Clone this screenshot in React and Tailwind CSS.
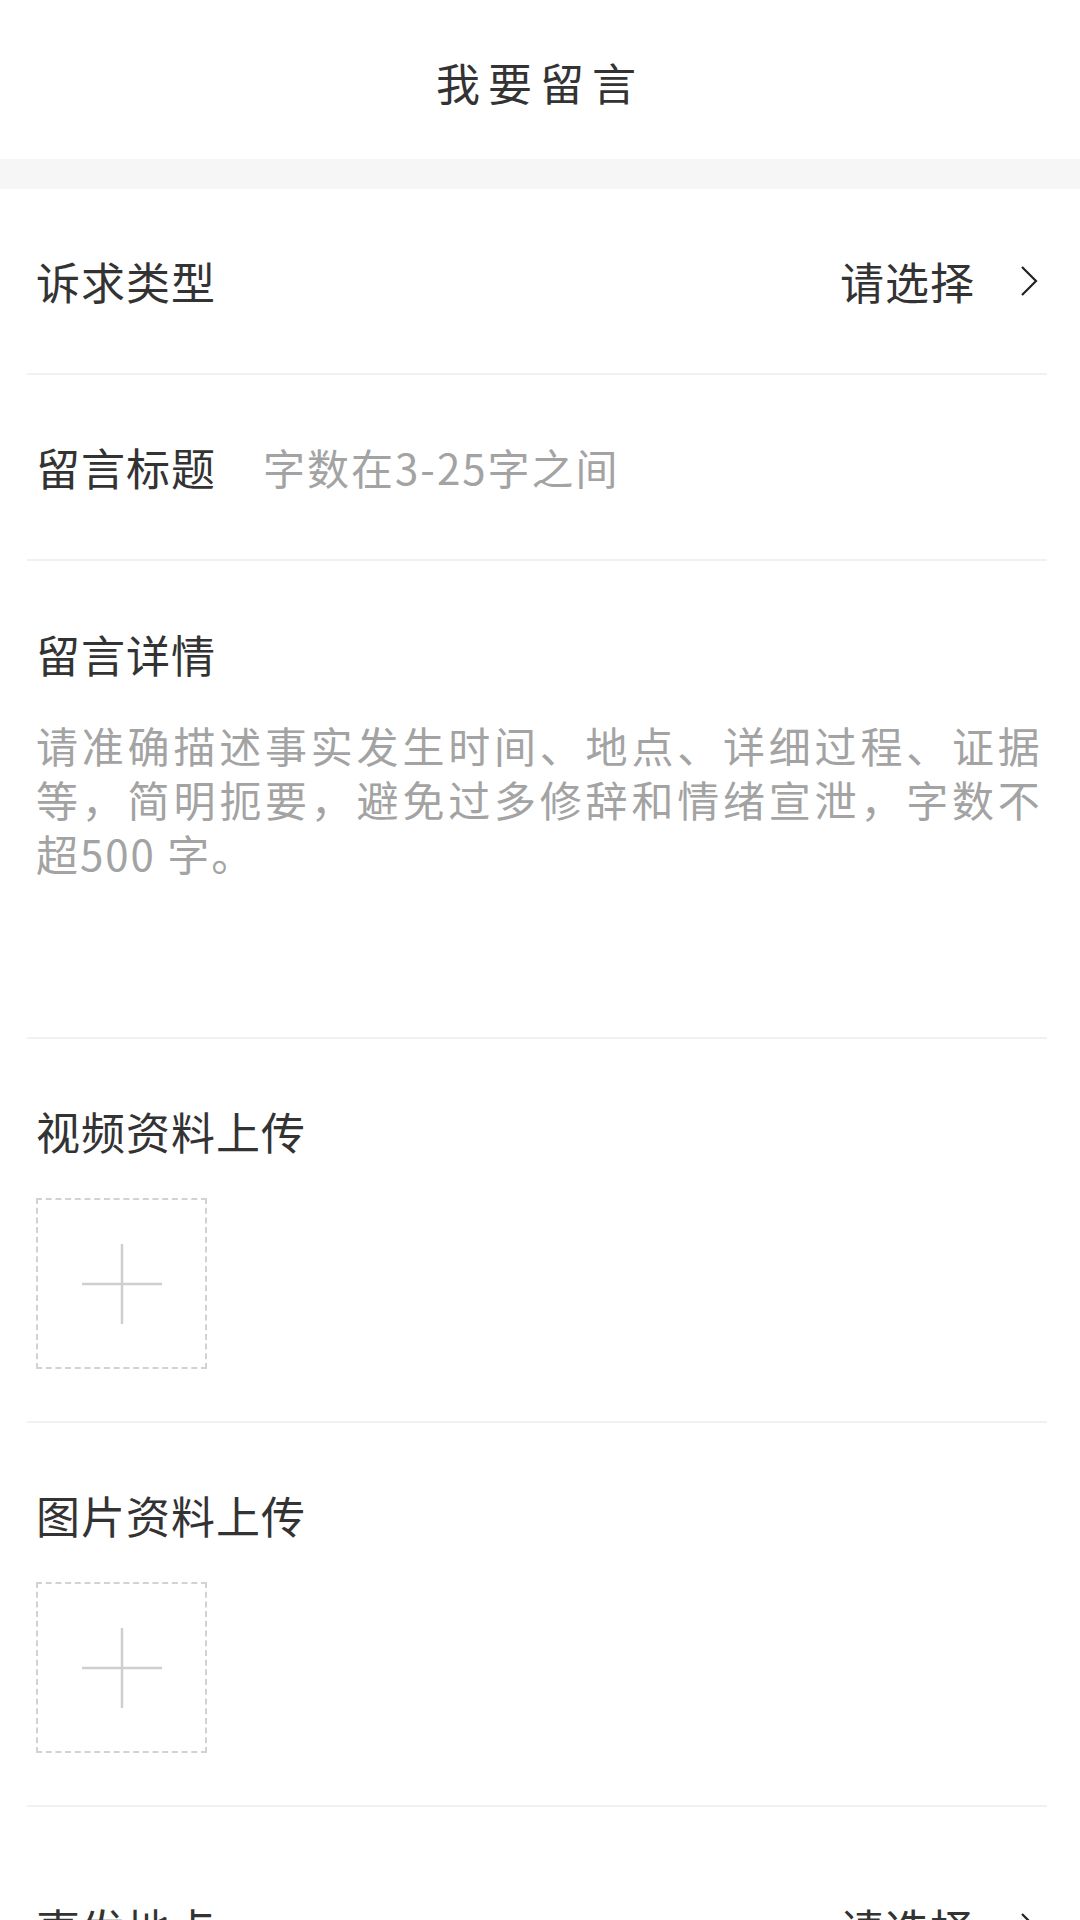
import React from "react";

const font = "font-['Noto_Sans_CJK_SC','Noto_Sans',sans-serif]";

const Chevron = () => (
  <svg width="18" height="32" viewBox="0 0 18 32" fill="none">
    <polyline points="2,2 16,16 2,30" stroke="#222" strokeWidth="2.2" strokeLinejoin="miter" />
  </svg>
);

const Divider = () => <div className="ml-[27px] mr-[33px] h-[2px] bg-[#f1f1f1]"></div>;

const SelectRow = ({ label, className }) => {
  return (
    <div className={"flex items-center justify-between pl-[36px] pr-[42px] " + className}>
      <span className="text-[44px] leading-[54px] tracking-[1px] text-[#333]">{label}</span>
      <div className="flex items-center gap-[45px]">
        <span className="text-[44px] leading-[54px] tracking-[1px] text-[#333]">请选择</span>
        <Chevron />
      </div>
    </div>
  );
};

const Upload = ({ label }) => {
  return (
    <div className="pl-[36px] pt-[65px] pb-[52px]">
      <div className="text-[44px] leading-[54px] tracking-[1px] text-[#333]">{label}</div>
      <div className="mt-[40px] flex h-[171px] w-[171px] items-center justify-center border-2 border-dashed border-[#d2d2d2]">
        <svg width="80" height="80" viewBox="0 0 80 80">
          <line x1="0" y1="40" x2="80" y2="40" stroke="#cfcfcf" strokeWidth="2.5" />
          <line x1="40" y1="0" x2="40" y2="80" stroke="#cfcfcf" strokeWidth="2.5" />
        </svg>
      </div>
    </div>
  );
};

const App = () => {
  return (
    <div className={"h-[1920px] w-[1080px] overflow-hidden bg-white " + font}>
      <div className="flex h-[159px] items-center justify-center pt-[4px]">
        <h1 className="text-[44px] font-normal leading-[54px] tracking-[8px] text-[#333]">我要留言</h1>
      </div>
      <div className="h-[30px] bg-[#f6f6f6]"></div>

      <SelectRow label="诉求类型" className="h-[184px]" />
      <Divider />

      <div className="flex h-[184px] items-center pl-[36px]">
        <span className="w-[227px] text-[44px] leading-[54px] tracking-[1px] text-[#333]">留言标题</span>
        <span className="text-[42px] leading-[54px] tracking-[2px] text-[#a3a3a3]">字数在3-25字之间</span>
      </div>
      <Divider />

      <div className="h-[476px] pl-[36px] pr-[36px] pt-[66px]">
        <div className="text-[44px] leading-[54px] tracking-[1px] text-[#333]">留言详情</div>
        <div className="mt-[37px] text-[42px] leading-[54px] tracking-[3.8px] text-[#a3a3a3]">
          <div className="whitespace-nowrap">请准确描述事实发生时间、地点、详细过程、证据</div>
          <div className="whitespace-nowrap">等，简明扼要，避免过多修辞和情绪宣泄，字数不</div>
          <div className="whitespace-nowrap tracking-[2px]">超500 字。</div>
        </div>
      </div>
      <Divider />

      <Upload label="视频资料上传" />
      <Divider />
      <Upload label="图片资料上传" />
      <Divider />

      <SelectRow label="事发地点" className="pt-[94px]" />
    </div>
  );
};

export default App;
